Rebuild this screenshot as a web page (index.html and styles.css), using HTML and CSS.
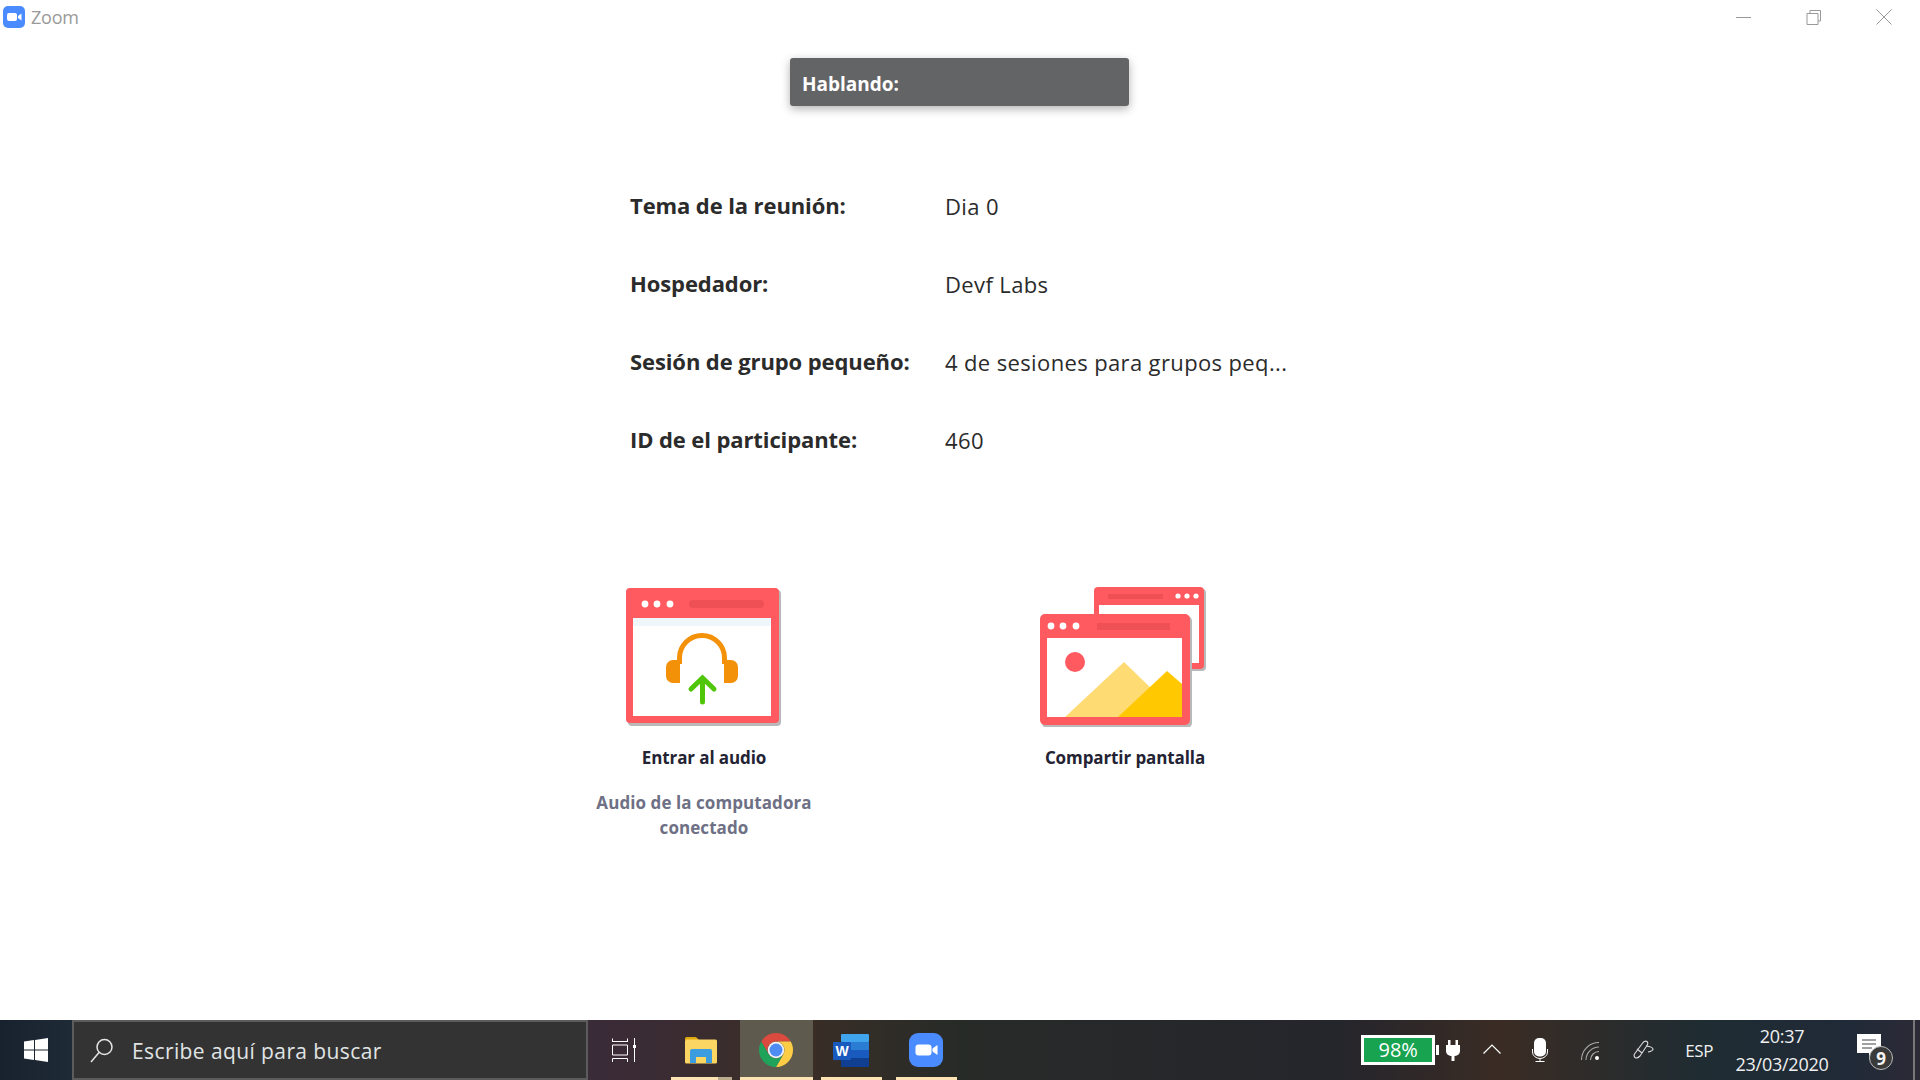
FILE: index.html
```html
<!DOCTYPE html>
<html lang="es">
<head>
<meta charset="utf-8">
<title>Zoom</title>
<link rel="stylesheet" href="styles.css">
</head>
<body>
<div class="app">
  <header class="titlebar">
    <svg class="app-logo" viewBox="0 0 22 22"><rect width="22" height="22" rx="5" fill="#4a8cff"/><rect x="4" y="7" width="10" height="8" rx="2" fill="#fff"/><path d="M15 10l3.500-2.500v7L15 12z" fill="#fff"/></svg>
    <span class="app-name">Zoom</span>
    <div class="win-controls">
      <svg class="win-btn" viewBox="0 0 16 16"><path d="M0 8.500h15" stroke="#999" fill="none"/></svg>
      <svg class="win-btn" viewBox="0 0 16 16"><path d="M4 4V1.500h10.500V12H12M1 4.500h11v11H1z" stroke="#999" fill="none"/></svg>
      <svg class="win-btn" viewBox="0 0 16 16"><path d="M.5.500l15 15M15.500.500l-15 15" stroke="#999" fill="none"/></svg>
    </div>
  </header>

  <main class="content">
    <div class="speaking">Hablando:</div>

    <dl class="info">
      <dt>Tema de la reunión:</dt><dd>Dia 0</dd>
      <dt>Hospedador:</dt><dd>Devf Labs</dd>
      <dt>Sesión de grupo pequeño:</dt><dd>4 de sesiones para grupos peq...</dd>
      <dt>ID de el participante:</dt><dd>460</dd>
    </dl>

    <div class="actions">
      <div class="action">
        <svg class="action-icon" width="260" height="140" viewBox="0 0 260 140">
          <rect x="54" y="3" width="153" height="136" rx="4" fill="#b9b9b9"/>
          <rect x="52" y="1" width="153" height="135" rx="4" fill="#ff5a5f"/>
          <rect x="59" y="31" width="138" height="98" fill="#fff"/>
          <rect x="59" y="31" width="138" height="8" fill="#eff6fc"/>
          <circle cx="71" cy="17" r="3.400" fill="#fff"/><circle cx="83" cy="17" r="3.400" fill="#fff"/><circle cx="96" cy="17" r="3.400" fill="#fff"/>
          <rect x="115" y="13" width="75" height="8" rx="4" fill="#ee5055"/>
          <path d="M105.500 77V71a22.500 22.500 0 0 1 45 0v6" fill="none" stroke="#f39109" stroke-width="5"/>
          <path d="M106 73v23h-7a7 7 0 0 1-7-7V80a7 7 0 0 1 7-7zM150 73v23h7a7 7 0 0 0 7-7V80a7 7 0 0 0-7-7z" fill="#f39109"/>
          <path d="M128.500 115V91M117 102l11.500-11 11.500 11" fill="none" stroke="#4fc60a" stroke-width="5" stroke-linecap="round"/>
        </svg>
        <div class="action-label">Entrar al audio</div>
        <div class="action-note">Audio de la computadora<br>conectado</div>
      </div>
      <div class="action">
        <svg class="action-icon" width="260" height="140" viewBox="0 0 260 140">
          <rect x="101" y="2" width="110" height="82" rx="4" fill="#b9b9b9"/>
          <rect x="99" y="0" width="110" height="82" rx="4" fill="#ff5a5f"/>
          <rect x="104" y="18" width="100" height="58" fill="#fff"/>
          <rect x="113" y="7" width="55" height="5" fill="#ee5055"/>
          <circle cx="183" cy="9" r="2.600" fill="#fff"/><circle cx="192" cy="9" r="2.600" fill="#fff"/><circle cx="201" cy="9" r="2.600" fill="#fff"/>
          <rect x="47" y="29" width="150" height="112" rx="5" fill="#b9b9b9"/>
          <rect x="45" y="27" width="150" height="111" rx="5" fill="#ff5a5f"/>
          <rect x="52" y="51" width="135" height="79" fill="#fff"/>
          <rect x="102" y="36" width="73" height="7" fill="#ee5055"/>
          <circle cx="56" cy="39" r="3.400" fill="#fff"/><circle cx="68" cy="39" r="3.400" fill="#fff"/><circle cx="81" cy="39" r="3.400" fill="#fff"/>
          <circle cx="80" cy="75" r="10" fill="#ff5a5f"/>
          <path d="M70 130l59-55 32 31-24 24z" fill="#ffdb73"/>
          <path d="M123 130l49-46 15 13v33z" fill="#ffc800"/>
        </svg>
        <div class="action-label">Compartir pantalla</div>
      </div>
    </div>
  </main>

  <footer class="taskbar">
    <div class="start">
      <svg width="24" height="24" viewBox="0 0 24 24"><path d="M0 3.500l10-1.400v9.400H0zM11 2l13-2v11.500H11zM0 12.500h10v9.400L0 20.500zM11 12.500h13V24l-13-2z" fill="#fff"/></svg>
    </div>
    <div class="search">
      <svg width="24" height="26" viewBox="0 0 24 26"><circle cx="14.500" cy="9" r="7.500" fill="none" stroke="#e6e6e6" stroke-width="1.500"/><path d="M9 14.500L1 24" stroke="#e6e6e6" stroke-width="1.500"/></svg>
      <span>Escribe aquí para buscar</span>
    </div>
    <div class="apps">
      <div class="app-slot slot-taskview">
        <svg width="24" height="24" viewBox="0 0 24 24"><path d="M.5 4V.5M15.500 4V.5M.5 3.500h15M.5 7h15v10H.5zM.5 24v-3.500h15V24M22.500 0v24" fill="none" stroke="#fff" stroke-width="1"/><rect x="21" y="7" width="3" height="3" fill="#fff"/></svg>
      </div>
      <div class="app-slot slot-folder">
        <svg class="shift-left" width="34" height="28" viewBox="0 0 34 28"><path d="M1 2.500Q1 1 2.500 1H12l3 3h-14z" fill="#e0a80f"/><rect x="1" y="3.500" width="32" height="24" rx="1.500" fill="#fcd663"/><path d="M6 27V15q0-2 2-2h18q2 0 2 2v12h-6v-6H12v6z" fill="#3c9ce0"/></svg>
        <i class="underline half"></i>
      </div>
      <div class="app-slot slot-chrome">
        <svg class="shift-left" width="34" height="34" viewBox="0 0 34 34"><path d="M2.280 8.500A17 17 0 0 1 31.720 8.500H17A8.500 8.500 0 0 0 9.640 21.250Z" fill="#db4a3e"/><path d="M2.280 8.500A17 17 0 0 1 31.720 8.500H17A8.500 8.500 0 0 0 9.640 21.250Z" fill="#fdce45" transform="rotate(120 17 17)"/><path d="M2.280 8.500A17 17 0 0 1 31.720 8.500H17A8.500 8.500 0 0 0 9.640 21.250Z" fill="#1fa25a" transform="rotate(240 17 17)"/><circle cx="17" cy="17" r="8.300" fill="#f3f3f3"/><circle cx="17" cy="17" r="6.500" fill="#4d8bf5"/></svg>
        <i class="underline"></i>
      </div>
      <div class="app-slot slot-word">
        <svg class="shift-left" width="36" height="33" viewBox="0 0 36 33"><rect x="8" y="0" width="28" height="8" rx="1" fill="#41a5ee"/><rect x="8" y="8" width="28" height="8" fill="#2b7cd3"/><rect x="8" y="16" width="28" height="8" fill="#185abd"/><path d="M8 24h28v8q0 1-1 1H9q-1 0-1-1z" fill="#103f91"/><rect x="0" y="8" width="18" height="18" rx="1" fill="#185abd"/><text class="word-w" x="9" y="22">W</text></svg>
        <i class="underline"></i>
      </div>
      <div class="app-slot slot-zoom">
        <svg class="shift-left" width="34" height="34" viewBox="0 0 34 34"><rect width="34" height="34" rx="9" fill="#4a8cff"/><rect x="6.500" y="11.500" width="16" height="11" rx="3" fill="#fff"/><path d="M23.500 15.500l5-3.500v10l-5-3.500z" fill="#fff"/></svg>
        <i class="underline"></i>
      </div>
    </div>
    <div class="tray">
      <div class="battery"><span class="battery-fill">98%</span></div>
      <svg class="plug" width="14" height="22" viewBox="0 0 14 22"><path d="M2 1h2.500v5h5V1H12v5h2v6a5 5 0 0 1-5 5h-.5v5h-3v-5H5a5 5 0 0 1-5-5V6h2z" fill="#fff"/></svg>
      <svg class="chev" width="18" height="10" viewBox="0 0 18 10"><path d="M.5 9.500L9 1l8.500 8.500" fill="none" stroke="#fff" stroke-width="1.200"/></svg>
      <svg class="mic" width="16" height="24" viewBox="0 0 16 24"><rect x="2" y="0" width="12" height="18.500" rx="5" fill="#fff"/><path d="M.5 11v3a7.500 6.500 0 0 0 15 0v-3M8 20.500V23M3.500 23.500h9" fill="none" stroke="#fff"/></svg>
      <svg class="wifi" width="18" height="18" viewBox="0 0 18 18"><path d="M.5 18A17.500 17.500 0 0 1 18 .5M5 18A13 13 0 0 1 18 5M9.500 18A8.500 8.500 0 0 1 18 9.500" fill="none" stroke="#aaa" stroke-width="1.100"/><circle cx="16" cy="16" r="2" fill="#fff"/></svg>
      <svg class="pen" width="21" height="20" viewBox="0 0 21 20"><path d="M1.500 14L10 2.500q2-2 4-1q1.500 1.500 0 4L7 16q-3 3-5 1.500q-1.500-1.500-.5-3.500zM4 9l5 4M13 6q7 1 7 3q0 2-5 3" fill="none" stroke="#ddd" stroke-width="1.100"/></svg>
      <span class="lang">ESP</span>
      <div class="clock"><span>20:37</span><span>23/03/2020</span></div>
      <div class="notify">
        <svg width="24" height="26" viewBox="0 0 24 26"><path d="M0 0h24v19H17l-5 7v-7H0z" fill="#fff"/><path d="M5 6h14M5 10h14M5 14h10" stroke="#444" stroke-width="1.200"/></svg>
        <span class="badge">9</span>
      </div>
      <div class="show-desktop"></div>
    </div>
  </footer>
</div>
</body>
</html>
```

FILE: styles.css
```css
* { box-sizing: border-box; }
html, body { margin: 0; height: 100%; background: #fff; overflow: hidden; }
body { font-family: "Open Sans", "Noto Sans", sans-serif; }
.app { display: flex; flex-direction: column; height: 1080px; }

.titlebar { height: 28px; display: flex; align-items: center; flex: none; padding: 6px 0 0 3px; }
.app-logo { width: 22px; height: 22px; }
.app-name { margin-left: 6px; font-size: 18px; letter-spacing: -0.2px; color: #9a9a9a; }
.win-controls { margin-left: auto; display: flex; gap: 54px; padding-right: 28px; }
.win-btn { width: 16px; height: 16px; }

.content { flex: 1; display: flex; flex-direction: column; min-height: 0; }
.speaking {
  align-self: center; width: 339px; height: 48px; margin: 30px 1px 0 0; padding: 3px 12px 0;
  display: flex; align-items: center; background: #636466; border-radius: 3px; color: #fff;
  font-size: 19px; font-weight: 700;
  box-shadow: 0 3px 10px rgba(0,0,0,.3);
}
.info {
  margin: 61px 0 0 630px; display: grid; grid-template-columns: 315px 1fr;
  grid-auto-rows: 78px; align-items: center; font-size: 22px; color: #2b2b2b;
}
.info dt { font-weight: 700; letter-spacing: -0.1px; margin: -3px 0 0; }
.info dd { margin: 0; letter-spacing: 0.37px; }

.actions { display: flex; gap: 161px; margin-top: 108px; padding-left: 574px; }
.action { width: 260px; display: flex; flex-direction: column; align-items: center; text-align: center; }
.action-icon { display: block; }
.action-label { margin-top: 18px; font-size: 17px; font-weight: 700; letter-spacing: -0.1px; color: #232333; line-height: 26px; }
.action-note { margin-top: 19px; font-size: 17px; font-weight: 700; letter-spacing: 0.07px; line-height: 25px; color: #6e7085; }

.taskbar {
  height: 60px; flex: none; display: flex; align-items: stretch; color: #fff;
  background: linear-gradient(90deg, #18222e 0, #1e2a36 70px, #3a2b38 600px, #3a2e26 800px, #272b28 960px, #25252c 1340px, #3a2c24 1500px, #1f2c32 1700px, #202a38 1850px, #2c2a36 1920px);
}
.start { width: 72px; display: flex; align-items: center; justify-content: center; }
.search {
  width: 516px; display: flex; align-items: center; gap: 18px; padding: 2px 0 0 16px;
  background: #333; border: 2px solid #5c5c5c;
  font-size: 21px; color: #e0e4e4; letter-spacing: 0.4px;
}
.apps { display: flex; }
.app-slot { position: relative; display: flex; align-items: center; justify-content: center; }
.slot-taskview { width: 72px; }
.slot-folder { width: 61px; margin-left: 11px; }
.slot-chrome { width: 73px; margin-left: 8px; background: #5f5a4e; }
.slot-word { width: 61px; margin-left: 8px; }
.slot-zoom { width: 61px; margin-left: 14px; }
.shift-left { margin-left: -2px; }
.underline { position: absolute; left: 0; right: 0; bottom: 0; height: 3px; background: #fde3b4; }
.underline.half { background: linear-gradient(90deg, #fde3b4 0 47px, #b9ab8c 47px); }
.word-w { font-family: "Liberation Sans", sans-serif; font-size: 14px; font-weight: 700; fill: #fff; text-anchor: middle; }

.tray { margin-left: auto; display: flex; align-items: center; height: 100%; }
.battery { width: 74px; height: 30px; border: 3px solid #fff; background: #fff; position: relative; }
.battery::after { content: ""; position: absolute; right: -7px; top: 7px; width: 3px; height: 10px; background: #fff; }
.battery-fill { display: block; height: 100%; background: #17a34f; font-size: 20px; line-height: 24px; text-align: center; color: #fff; }
.plug { margin-left: 11px; }
.chev { margin-left: 23px; margin-bottom: 2px; }
.mic { margin-left: 31px; }
.wifi { margin-left: 33px; margin-top: 2px; }
.pen { margin-left: 34px; }
.lang { margin-left: 31px; font-size: 17px; letter-spacing: -0.4px; color: #f0f0f0; }
.clock { margin-left: 20px; width: 98px; display: flex; flex-direction: column; align-items: center; font-size: 18px; line-height: 28px; color: #f0f0f0; letter-spacing: -0.25px; }
.notify { position: relative; margin-left: 26px; width: 24px; height: 26px; margin-bottom: 6px; }
.notify svg { display: block; }
.badge {
  position: absolute; left: 12px; top: 12px; width: 24px; height: 24px; border-radius: 50%;
  display: flex; align-items: center; justify-content: center; background: #3a3a3a;
  border: 1px solid #bbb; font-size: 17px; font-weight: 700; color: #f4f4f4;
}
.show-desktop { margin-left: 32px; width: 7px; height: 100%; border-left: 2px solid #777; }
```
